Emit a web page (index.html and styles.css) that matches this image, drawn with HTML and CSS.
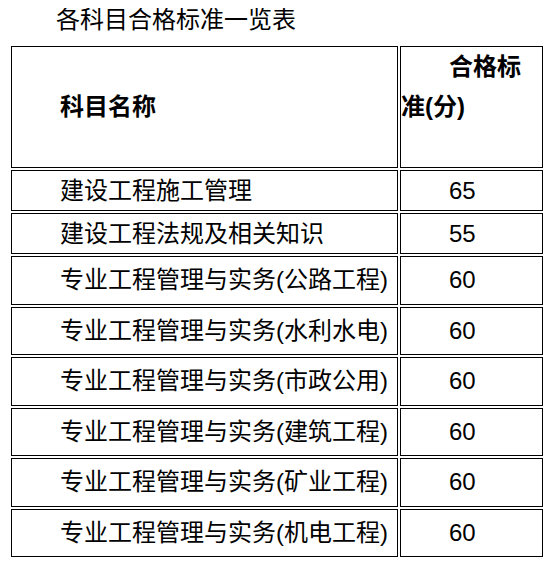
FILE: index.html
```html
<!DOCTYPE html>
<html lang="zh-CN">
<head>
<meta charset="utf-8">
<title>各科目合格标准一览表</title>
<link rel="stylesheet" href="styles.css">
</head>
<body>
<p class="title">各科目合格标准一览表</p>
<table class="grid">
  <tbody>
    <tr class="head">
      <td class="name">科目名称</td>
      <td class="score wrap">合格标准(分)</td>
    </tr>
    <tr class="short">
      <td class="name">建设工程施工管理</td>
      <td class="score">65</td>
    </tr>
    <tr class="short">
      <td class="name">建设工程法规及相关知识</td>
      <td class="score">55</td>
    </tr>
    <tr class="tall">
      <td class="name">专业工程管理与实务(公路工程)</td>
      <td class="score">60</td>
    </tr>
    <tr class="tall">
      <td class="name">专业工程管理与实务(水利水电)</td>
      <td class="score">60</td>
    </tr>
    <tr class="tall">
      <td class="name">专业工程管理与实务(市政公用)</td>
      <td class="score">60</td>
    </tr>
    <tr class="tall">
      <td class="name">专业工程管理与实务(建筑工程)</td>
      <td class="score">60</td>
    </tr>
    <tr class="tall">
      <td class="name">专业工程管理与实务(矿业工程)</td>
      <td class="score">60</td>
    </tr>
    <tr class="tall">
      <td class="name">专业工程管理与实务(机电工程)</td>
      <td class="score">60</td>
    </tr>
  </tbody>
</table>
</body>
</html>
```
FILE: styles.css
```css
html {
  background: #fff;
}

body {
  margin: 8px;
  font-family: "Liberation Sans", "Noto Sans CJK SC", sans-serif;
  font-size: 24px;
  color: #000;
}

.title {
  margin: 0 0 12px;
  line-height: 24px;
  text-indent: 2em;
}

.grid {
  margin-left: 1px;
  width: 536px;
  table-layout: fixed;
  border-collapse: separate;
  border-spacing: 2px;
}

.grid td {
  box-sizing: border-box;
  border: 1px solid #000;
  padding: 0;
  text-indent: 2em;
  text-align: left;
  vertical-align: middle;
  line-height: 28px;
}

.grid .name {
  width: 387px;
}

.grid .score {
  width: 143px;
}

.head td {
  height: 122px;
  font-weight: bold;
}

.head .wrap {
  vertical-align: top;
  line-height: 40px;
}

.short td {
  height: 41px;
}

.tall td {
  height: 48.5px;
}
```
